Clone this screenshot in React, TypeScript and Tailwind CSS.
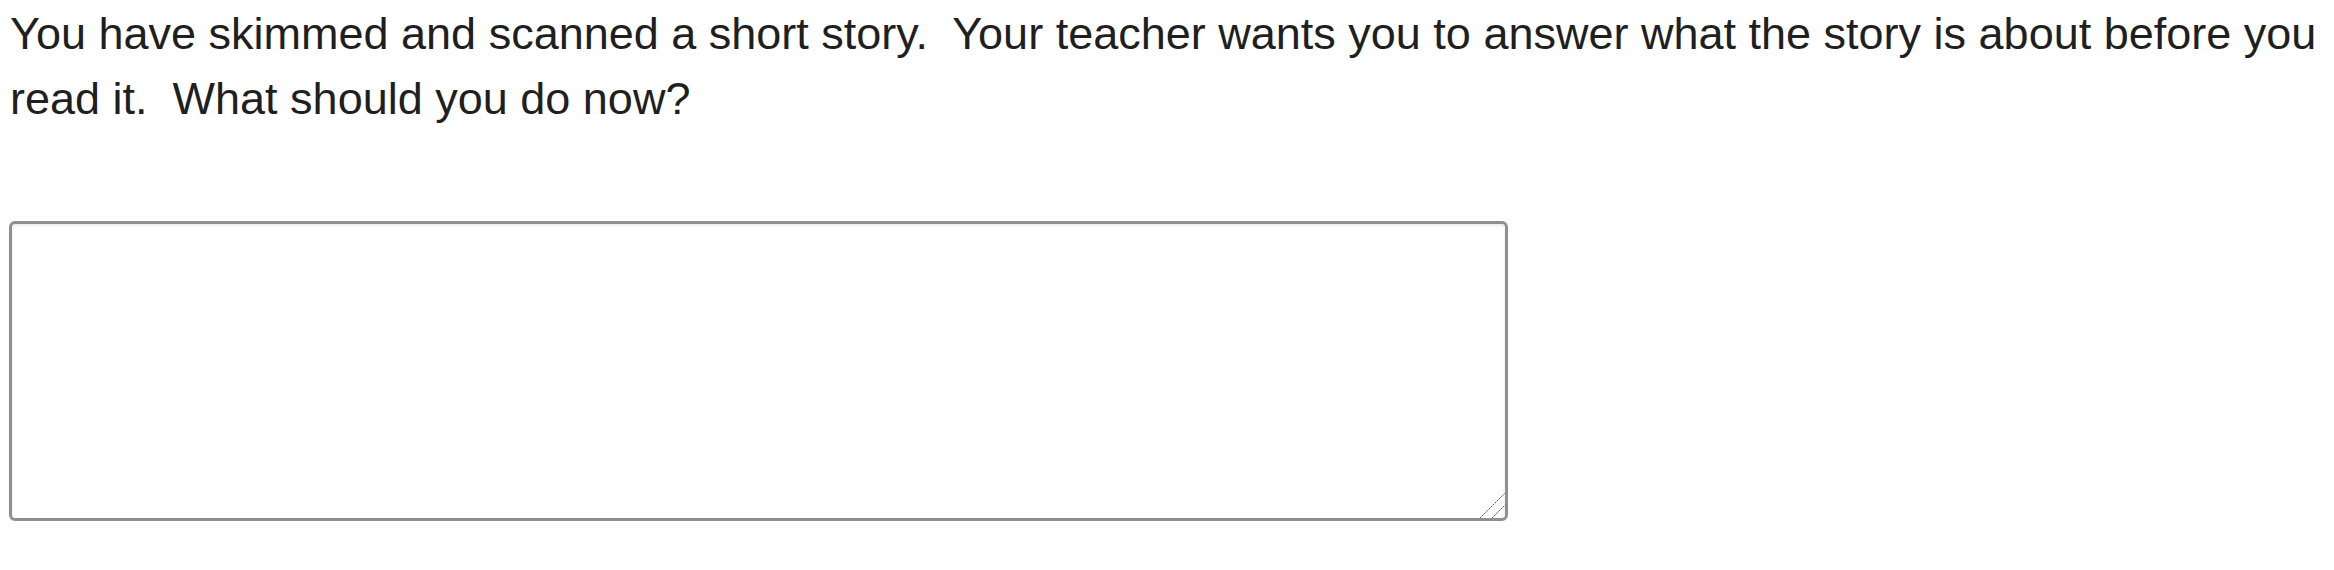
export default function App() {
  return (
    <div className="min-h-screen bg-white" style={{ fontFamily: '"Liberation Sans", Arial, sans-serif' }}>
      <p className="pl-[10px] pr-2 pt-[1px] text-[45px] leading-[65px] text-[#1f1f1f]">
        You have skimmed and scanned a short story.&nbsp; Your teacher wants you to answer what the story is about before you read it.&nbsp; What should you do now?
      </p>
      <div className="mt-[90px] pl-[9px]">
        <div className="relative w-fit">
          <textarea
            className="block w-[1499px] h-[300px] resize-none rounded-[6px] border-[3px] border-[#8f8f8f] bg-white shadow-[inset_0_2px_3px_rgba(0,0,0,0.08)] outline-none"
          />
          {/* resize grip */}
          <svg className="absolute right-[2px] bottom-[2px] pointer-events-none" width="28" height="28" viewBox="0 0 28 28">
            <line x1="2" y1="27" x2="27" y2="2" stroke="#555" strokeWidth="1" strokeDasharray="2 1" />
            <line x1="14" y1="27" x2="27" y2="14" stroke="#555" strokeWidth="1" strokeDasharray="2 1" />
          </svg>
        </div>
      </div>
    </div>
  );
}
